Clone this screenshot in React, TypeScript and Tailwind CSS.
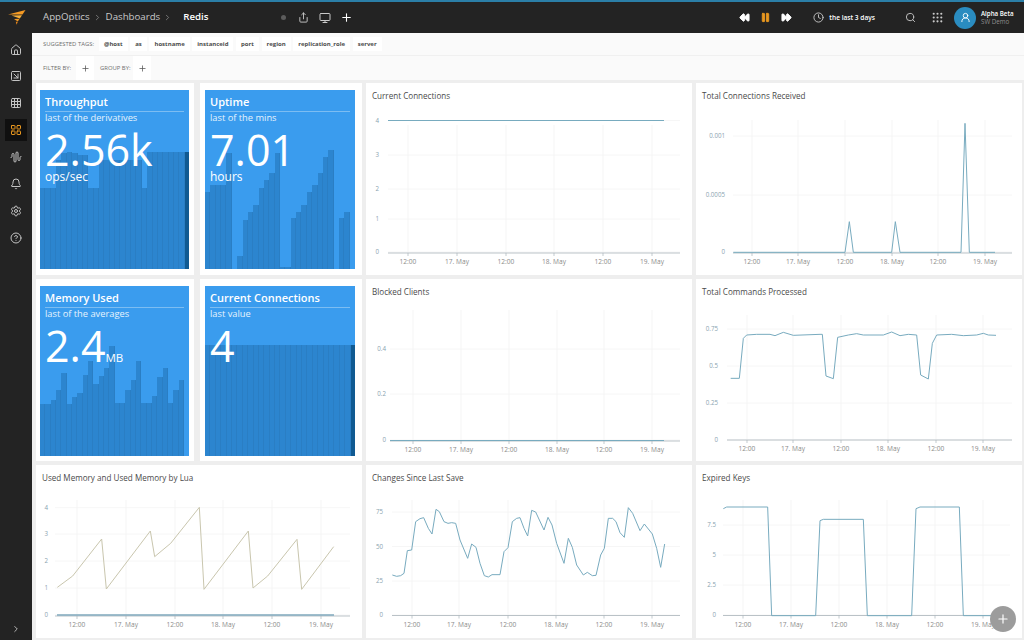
import React from 'react';
import {
  AudioWaveform, Bell, ChevronRight, CircleHelp, Clock, FastForward, Grid3x3, Grip, House, LayoutGrid, Monitor, Pause,
  Plus, Rewind, Search, Settings, Share, SquareArrowDownRight, UserRound,
} from 'lucide-react';

type Pt = [number, number];

const tags = ['@host', 'as', 'hostname', 'instanceid', 'port', 'region', 'replication_role', 'server'];

const sideIcons = [House, SquareArrowDownRight, Grid3x3, LayoutGrid, AudioWaveform, Bell, Settings, CircleHelp];

// points were read off 3x crops, so they get scaled back down to page coordinates
const crop = (ox: number, oy: number, pts: Pt[]): Pt[] => pts.map(([x, y]) => [ox + x / 3, oy + y / 3]);
const toPath = (pts: Pt[]) => pts.map(([x, y]) => `${x},${y}`).join(' ');

interface Series {
  points: Pt[];
  color: string;
  width?: number;
}

interface ChartProps {
  title: string;
  box: [number, number, number, number];
  axis: { x1: number; x2: number; y: number };
  xTicks: number[];
  yTicks: { label: string; x: number; y: number }[];
  series: Series[];
  gridTop: number;
}

const xLabels = ['12:00', '17. May', '12:00', '18. May', '12:00', '19. May'];

const Chart: React.FC<ChartProps> = ({ title, box, axis, xTicks, yTicks, series, gridTop }) => {
  const [x, y, w, h] = box;
  return (
    <div className="flex min-h-0 flex-col bg-white">
      <div className="h-[24px] shrink-0 px-[6px] pt-[7px] text-[8.1px] leading-[11px] text-[#4a4a4a]">{title}</div>
      <svg className="min-h-0 flex-1" viewBox={`${x} ${y + 24} ${w} ${h - 24}`}>
        {xTicks.map((t) => (
          <line key={t} x1={t} x2={t} y1={gridTop} y2={axis.y} stroke="#f2f2f2" strokeWidth="0.8" />
        ))}
        {yTicks.map((t) => (
          <line key={t.label} x1={axis.x1} x2={axis.x2} y1={t.y} y2={t.y} stroke="#f4f4f4" strokeWidth="0.8" />
        ))}
        <line x1={axis.x1} x2={axis.x2} y1={axis.y} y2={axis.y} stroke="#a9b4ba" strokeWidth="0.8" />
        {xTicks.map((t, i) => (
          <g key={t}>
            <line x1={t} x2={t} y1={axis.y} y2={axis.y + 3} stroke="#a9b4ba" strokeWidth="0.7" />
            <text x={t} y={axis.y + 11} textAnchor="middle" fontSize="6.6" fill="#8b8b8b">{xLabels[i]}</text>
          </g>
        ))}
        {yTicks.map((t) => (
          <text key={t.label} x={t.x} y={t.y + 2.2} textAnchor="end" fontSize="6.2" fill="#8aa3b0">{t.label}</text>
        ))}
        {series.map((s, i) => (
          <polyline key={i} points={toPath(s.points)} fill="none" stroke={s.color} strokeWidth={s.width ?? 1} strokeLinejoin="round" />
        ))}
      </svg>
    </div>
  );
};

interface TileProps {
  title: string;
  sub: string;
  value: string;
  unit?: string;
  below?: string;
  tops: number[];
  bottom: number;
  lastDark?: boolean;
}

const Tile: React.FC<TileProps> = ({ title, sub, value, unit, below, tops, bottom, lastDark }) => (
  <div className="relative h-full overflow-hidden bg-[#3a9cee]">
    <div className="flex h-full items-end">
      {tops.map((t, i) => (
        <div
          key={i}
          className={
            lastDark && i === tops.length - 1
              ? 'flex-1 bg-[#105a92]'
              : 'flex-1 border-r border-r-[#2a7ec4] bg-[#2c85cf]'
          }
          style={{ height: t === 0 ? 0 : (bottom - t) / 3 }}
        />
      ))}
    </div>
    <div className="absolute inset-x-[5px] top-0 text-white">
      <div className="border-b border-b-[#7cbdf2] pt-[4px] pb-[2px] text-[11px] leading-[15px] font-semibold">{title}</div>
      <div className="text-[9.3px] leading-[12px] text-[#e6f3fd]">{sub}</div>
      <div className="mt-[6px] flex items-baseline">
        <span className="text-[43px] leading-[40px]">{value}</span>
        {unit && <span className="text-[11.5px] leading-none">{unit}</span>}
      </div>
      {below && <div className="text-[12px] leading-[13px] font-medium">{below}</div>}
    </div>
  </div>
);

const Logo = () => (
  <svg width="18" height="15" viewBox="0 0 18 15">
    <path d="M0 4.5 L17.5 0 L14.5 4.6 Z" fill="#f59a23" />
    <path d="M3.5 5.6 L14 5.2 L11.8 8.4 Z" fill="#f7b13c" />
    <path d="M6 9 L11.6 8.8 L9.8 11.4 Z" fill="#f59a23" />
    <path d="M7.8 11.8 L9.8 11.7 L8.6 14.8 Z" fill="#e8861a" />
  </svg>
);

const TopBar = () => (
  <header className="flex h-[33px] shrink-0 items-center border-t-2 border-t-[#2b7fa8] bg-[#232323] text-[#c9c9c9]">
    <div className="flex w-[33px] justify-center"><Logo /></div>
    <div className="ml-[10px] flex items-center text-[9.7px]">
      <span>AppOptics</span>
      <ChevronRight size={9} className="mx-[3.5px] text-[#8c8c8c]" />
      <span>Dashboards</span>
      <ChevronRight size={9} className="mr-[11px] ml-[3px] text-[#8c8c8c]" />
      <span className="font-semibold text-white">Redis</span>
    </div>
    <div className="ml-[73px] flex items-center">
      <span className="h-[5px] w-[5px] rounded-full bg-[#5c5c5c]" />
      <Share size={11} className="ml-[12px]" />
      <Monitor size={12} className="ml-[10px]" />
      <Plus size={13} className="ml-[9px] text-white" />
    </div>
    <div className="ml-auto flex items-center">
      <Rewind size={11} fill="currentColor" className="text-white" />
      <Pause size={11} fill="currentColor" className="ml-[10px] text-[#e8971f]" />
      <FastForward size={11} fill="currentColor" className="ml-[10px] text-white" />
      <Clock size={11} className="ml-[21px]" />
      <span className="ml-[5px] text-[6.6px] font-semibold text-white">the last 3 days</span>
      <Search size={11} className="ml-[30px]" />
      <Grip size={13} className="ml-[15px]" />
      <div className="ml-[10px] flex h-[22px] w-[22px] items-center justify-center rounded-full bg-[#2a8cc0] text-white">
        <UserRound size={11} />
      </div>
      <div className="mr-[10px] ml-[5px] w-[33px] text-[6.2px] leading-[8px] whitespace-nowrap">
        <div className="font-semibold text-white">Alpha Beta</div>
        <div className="text-[#8f8f8f]">SW Demo</div>
      </div>
    </div>
  </header>
);

const Sidebar = () => (
  <aside className="flex w-[32px] shrink-0 flex-col items-center bg-[#232323] pt-[5.5px] text-[#c4c4c4]">
    {sideIcons.map((Icon, i) => (
      <div
        key={i}
        className={
          i === 3
            ? 'mb-[4.9px] flex h-[22px] w-[22px] items-center justify-center bg-[#101010] text-[#e8971f]'
            : 'mb-[4.9px] flex h-[22px] w-[22px] items-center justify-center'
        }
      >
        <Icon size={12} />
      </div>
    ))}
    <ChevronRight size={10} className="mt-auto mb-[6px] text-[#d0d0d0]" />
  </aside>
);

const FilterBar = () => (
  <div className="h-[47px] shrink-0 bg-[#fafafa] text-[#6d6d6d]">
    <div className="flex h-[23px] items-center border-b border-b-[#f0f0f0] pl-[11px]">
      <span className="w-[56px] text-[5.9px] whitespace-nowrap">SUGGESTED TAGS:</span>
      {tags.map((t) => (
        <span key={t} className="mr-[2.6px] bg-white px-[5px] py-[3px] text-[6px] leading-[8px] font-bold text-[#4d4d4d]">{t}</span>
      ))}
    </div>
    <div className="flex h-[24px] items-center pl-[11px] text-[5.9px]">
      <span className="w-[33px]">FILTER BY:</span>
      <span className="flex h-[24px] w-[18px] items-center justify-center bg-white text-[#555]"><Plus size={9} /></span>
      <span className="ml-[6px] w-[33px]">GROUP BY:</span>
      <span className="flex h-[24px] w-[18px] items-center justify-center bg-white text-[#555]"><Plus size={9} /></span>
    </div>
  </div>
);

const lineColor = '#78abbf';

const memory = crop(0, 460, [[172,382],[218,348],[305,237],[319,387],[451,213],[464,290],[512,250],[598,142],[612,388],[745,213],[759,384],[803,348],[891,238],[905,388],[1001,260]]);
const changes = crop(360, 460, [[97,345],[110,349],[122,347],[132,340],[142,272],[155,270],[167,185],[180,176],[191,173],[205,205],[216,222],[228,148],[238,155],[252,185],[264,190],[275,188],[287,190],[300,240],[323,295],[335,252],[348,262],[360,310],[373,347],[385,351],[396,344],[420,344],[432,275],[444,263],[457,185],[470,175],[480,173],[492,205],[503,228],[515,151],[527,156],[552,210],[564,172],[576,195],[590,250],[612,310],[625,235],[637,262],[650,315],[670,345],[682,337],[697,347],[708,346],[722,285],[733,265],[745,175],[758,175],[768,185],[780,218],[793,232],[805,143],[818,160],[840,212],[853,192],[877,222],[890,265],[902,322],[914,252]]);
const commands = crop(690, 275, [[122,310],[148,310],[160,190],[170,180],[200,178],[240,178],[255,182],[280,172],[310,181],[390,178],[397,178],[408,303],[430,311],[443,187],[475,180],[500,176],[520,180],[580,180],[605,171],[630,182],[655,178],[680,180],[692,300],[715,312],[727,205],[740,180],[785,178],[820,182],[860,180],[880,175],[895,180],[918,181]]);
const expired = crop(690, 460, [[100,146],[110,141],[233,141],[245,467],[377,467],[390,182],[400,178],[520,178],[532,467],[665,467],[678,146],[690,141],[808,141],[820,467],[905,467]]);
const received = crop(690, 80, [[130,517],[465,517],[478,425],[490,517],[605,517],[616,425],[630,517],[813,517],[825,130],[838,517],[915,517]]);

export default function App() {
  return (
    <div className="relative flex h-[640px] w-[1024px] flex-col overflow-hidden bg-[#eeeeee] font-['Open_Sans',sans-serif]">
      <TopBar />
      <div className="flex min-h-0 flex-1">
        <Sidebar />
        <main className="flex min-w-0 flex-1 flex-col">
          <FilterBar />
          <div className="grid grid-cols-[326px_326px_326px] grid-rows-[192px_182px_173px] gap-x-[4px] gap-y-[4px] pt-[3px] pl-[4px]">
            <div className="grid grid-cols-[158px_162px] gap-x-[6px]">
              <div className="bg-white pt-[7px] pr-[5px] pb-[6px] pl-[4px]">
                <Tile
                  title="Throughput"
                  sub="last of the derivatives"
                  value="2.56k"
                  below="ops/sec"
                  bottom={567}
                  lastDark
                  tops={[325,325,325,240,220,215,220,225,225,325,325,240,240,240,240,240,240,240,240,325,215,215,215,215,215,215,215,215]}
                />
              </div>
              <div className="bg-white pt-[7px] pr-[7px] pb-[6px] pl-[5px]">
                <Tile
                  title="Uptime"
                  sub="last of the mins"
                  value="7.01"
                  below="hours"
                  bottom={567}
                  tops={[335,315,315,315,220,0,528,420,395,375,325,300,280,220,560,560,415,395,375,335,315,280,232,210,0,415,395,0]}
                />
              </div>
            </div>
            <Chart
              title="Current Connections"
              box={[366, 83, 326, 192]}
              axis={{ x1: 388, x2: 680, y: 253 }}
              gridTop={125}
              xTicks={[408, 457, 506, 554, 603, 652]}
              yTicks={[
                { label: '4', x: 379, y: 120.5 },
                { label: '3', x: 379, y: 155 },
                { label: '2', x: 379, y: 189 },
                { label: '1', x: 379, y: 219 },
                { label: '0', x: 379, y: 252 },
              ]}
              series={[{ points: [[388, 120.5], [664, 120.5]], color: lineColor }]}
            />
            <Chart
              title="Total Connections Received"
              box={[696, 83, 326, 192]}
              axis={{ x1: 733, x2: 1012, y: 253 }}
              gridTop={120}
              xTicks={[752, 798, 845, 892, 938, 985]}
              yTicks={[
                { label: '0.001', x: 725, y: 136 },
                { label: '0.0005', x: 725, y: 195 },
                { label: '0', x: 725, y: 252 },
              ]}
              series={[{ points: received, color: lineColor }]}
            />
            <div className="grid grid-cols-[158px_162px] gap-x-[6px]">
              <div className="bg-white pt-[7px] pr-[5px] pb-[5px] pl-[4px]">
                <Tile
                  title="Memory Used"
                  sub="last of the averages"
                  value="2.4"
                  unit="MB"
                  bottom={543}
                  tops={[388,388,375,345,295,388,365,355,300,258,328,303,278,212,385,385,345,315,258,385,385,362,305,280,385,345,315,0]}
                />
              </div>
              <div className="bg-white pt-[7px] pr-[7px] pb-[5px] pl-[5px]">
                <Tile
                  title="Current Connections"
                  sub="last value"
                  value="4"
                  bottom={543}
                  lastDark
                  tops={Array.from({ length: 28 }, () => 210)}
                />
              </div>
            </div>
            <Chart
              title="Blocked Clients"
              box={[366, 279, 326, 182]}
              axis={{ x1: 390, x2: 680, y: 441 }}
              gridTop={310}
              xTicks={[413, 461, 509, 557, 604, 652]}
              yTicks={[
                { label: '0.4', x: 386, y: 349 },
                { label: '0.2', x: 386, y: 394 },
                { label: '0', x: 386, y: 440 },
              ]}
              series={[{ points: [[390, 440.5], [664, 440.5]], color: lineColor, width: 1.2 }]}
            />
            <Chart
              title="Total Commands Processed"
              box={[696, 279, 326, 182]}
              axis={{ x1: 727, x2: 1012, y: 440 }}
              gridTop={315}
              xTicks={[747, 793, 841, 888, 936, 983]}
              yTicks={[
                { label: '0.75', x: 718, y: 329 },
                { label: '0.5', x: 718, y: 366 },
                { label: '0.25', x: 718, y: 403 },
                { label: '0', x: 718, y: 440 },
              ]}
              series={[{ points: commands, color: lineColor }]}
            />
            <Chart
              title="Used Memory and Used Memory by Lua"
              box={[36, 465, 326, 173]}
              axis={{ x1: 55, x2: 350, y: 616 }}
              gridTop={500}
              xTicks={[77, 126, 175, 223, 272, 321]}
              yTicks={[
                { label: '4', x: 48, y: 507.7 },
                { label: '3', x: 48, y: 534 },
                { label: '2', x: 48, y: 561 },
                { label: '1', x: 48, y: 588 },
                { label: '0', x: 48, y: 615 },
              ]}
              series={[
                { points: memory, color: '#c9c6ae' },
                { points: [[57, 615], [334, 615]], color: '#7fa9bd', width: 1.4 },
              ]}
            />
            <Chart
              title="Changes Since Last Save"
              box={[366, 465, 326, 173]}
              axis={{ x1: 392, x2: 680, y: 615.5 }}
              gridTop={500}
              xTicks={[412, 459, 508, 556, 604, 652]}
              yTicks={[
                { label: '75', x: 383, y: 512 },
                { label: '50', x: 383, y: 546.5 },
                { label: '25', x: 383, y: 581 },
                { label: '0', x: 383, y: 615 },
              ]}
              series={[{ points: changes, color: lineColor }]}
            />
            <Chart
              title="Expired Keys"
              box={[696, 465, 326, 173]}
              axis={{ x1: 723, x2: 1010, y: 615.5 }}
              gridTop={500}
              xTicks={[743, 791, 839, 887, 935, 983]}
              yTicks={[
                { label: '7.5', x: 716, y: 525 },
                { label: '5', x: 716, y: 555 },
                { label: '2.5', x: 716, y: 585 },
                { label: '0', x: 716, y: 615 },
              ]}
              series={[{ points: expired, color: lineColor }]}
            />
          </div>
        </main>
      </div>
      <button className="absolute top-[606px] left-[990px] flex h-[26px] w-[26px] items-center justify-center rounded-full bg-[#9c9c9c] text-white">
        <Plus size={14} />
      </button>
    </div>
  );
}
